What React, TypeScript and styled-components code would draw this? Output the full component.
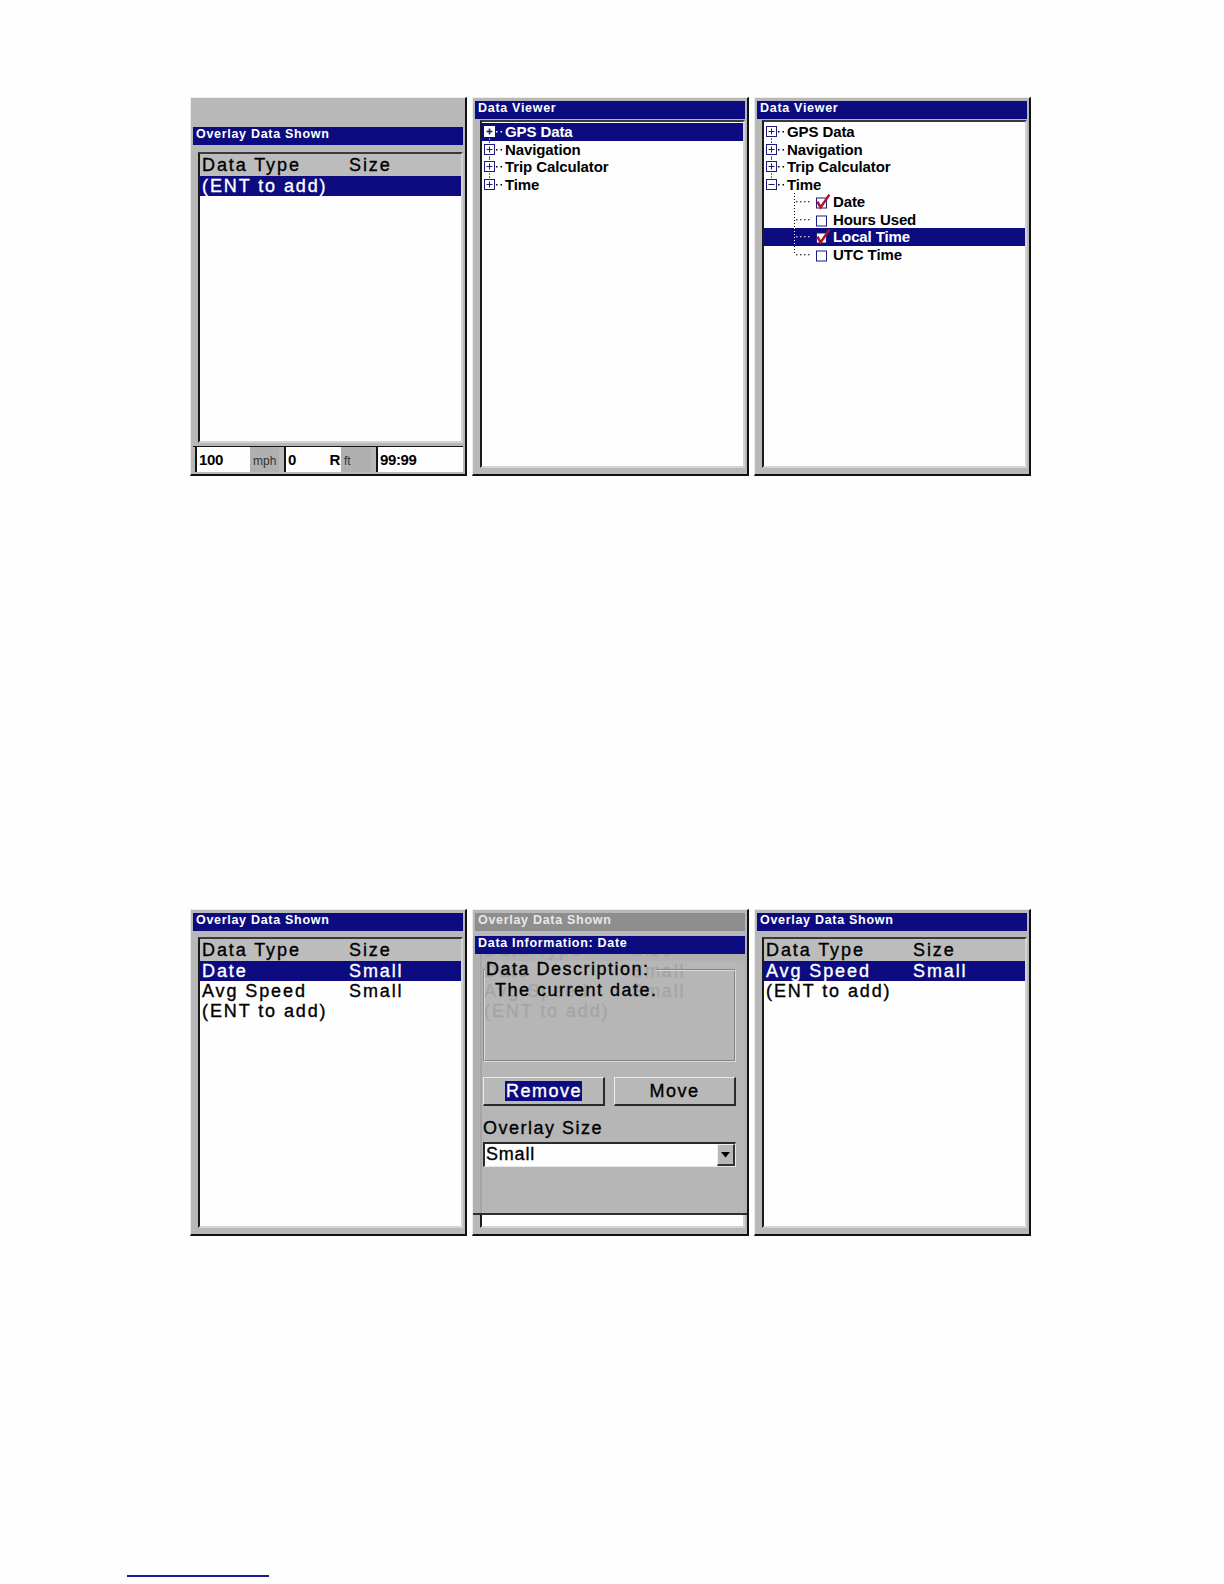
import styled, { createGlobalStyle } from "styled-components";

const NAVY = "#0c0c80";
const SCREEN_GRAY = "#b8b8b8";
const LINE_BLUE = "#1c1c7c";

const GlobalStyle = createGlobalStyle`
  body {
    margin: 0;
    background: #fefefe;
    font-family: "Liberation Sans", Arial, sans-serif;
  }
`;

type OverlayRow = { name: string; size?: string; sel?: boolean };
type TreeItem = { label: string; open?: boolean; sel?: boolean; children?: { label: string; checked: boolean; sel?: boolean }[] };

const Expander = ({ open, sel, first, last }: { open?: boolean; sel?: boolean; first?: boolean; last?: boolean }) => {
  const ink = sel ? "#fff" : "#000";
  return (
    <svg width="23" height="17.5" viewBox="0 0 23 17.5">
      {!first && <rect x="7" y="0.5" width="1" height="1.2" fill={ink} />}
      {!last && <rect x="7" y="15.5" width="1" height="1.2" fill={ink} />}
      <rect x="2.5" y="3.5" width="10" height="10" fill={sel ? "#fff" : "none"} stroke={sel ? "#fff" : LINE_BLUE} />
      <path d="M4.5 8.5H10.5" stroke={LINE_BLUE} strokeWidth={sel ? 1.6 : 1} />
      {!open && <path d="M7.5 5.5V11.5" stroke={LINE_BLUE} strokeWidth={sel ? 1.6 : 1} />}
      <rect x="14" y="8" width="1.5" height="1.5" fill={ink} />
      <rect x="18.5" y="8" width="1.5" height="1.5" fill={ink} />
    </svg>
  );
};

const ChildConnector = ({ last, sel }: { last?: boolean; sel?: boolean }) => {
  const ink = sel ? "#fff" : "#000";
  return (
    <svg width="50" height="17.5" viewBox="0 0 50 17.5">
      <line x1="30.5" y1="0" x2="30.5" y2={last ? 9 : 17.5} stroke={ink} strokeDasharray="1 2" />
      <line x1="32" y1="8.75" x2="48" y2="8.75" stroke={ink} strokeDasharray="1.5 2.5" />
    </svg>
  );
};

const CheckBox = ({ checked }: { checked: boolean }) => (
  <svg width="16" height="17.5" viewBox="0 0 16 17.5" overflow="visible">
    <rect x="2.5" y="5" width="10" height="10" fill="#fff" stroke={LINE_BLUE} />
    {checked && <path d="M3.4 8.6L6.6 14.4L15.4 1.6" fill="none" stroke="#b0102a" strokeWidth="2.5" />}
  </svg>
);

const OverlayList = ({ rows, gap }: { rows: OverlayRow[]; gap: number }) => (
  <ListBox $mt={gap}>
    <ListHeader>
      <span>Data Type</span>
      <span>Size</span>
    </ListHeader>
    {rows.map((r) => (
      <ListRow key={r.name} $sel={r.sel}>
        <span>{r.name}</span>
        <span>{r.size}</span>
      </ListRow>
    ))}
  </ListBox>
);

const DataViewer = ({ items }: { items: TreeItem[] }) => (
  <Screen $h={379}>
    <TitleBar>Data Viewer</TitleBar>
    <ListBox $mt={1} $pt={1}>
      {items.map((it, i) => (
        <div key={it.label}>
          <TreeRow $sel={it.sel}>
            <Expander open={it.open} sel={it.sel} first={i === 0} last={i === items.length - 1} />
            <TreeLabel>{it.label}</TreeLabel>
          </TreeRow>
          {it.open &&
            it.children?.map((c, j) => (
              <TreeRow key={c.label} $sel={c.sel}>
                <ChildConnector sel={c.sel} last={j === (it.children?.length ?? 0) - 1} />
                <CheckBox checked={c.checked} />
                <ChildLabel>{c.label}</ChildLabel>
              </TreeRow>
            ))}
        </div>
      ))}
    </ListBox>
  </Screen>
);

const treeClosed: TreeItem[] = [
  { label: "GPS Data", sel: true },
  { label: "Navigation" },
  { label: "Trip Calculator" },
  { label: "Time" },
];

const treeOpen: TreeItem[] = [
  { label: "GPS Data" },
  { label: "Navigation" },
  { label: "Trip Calculator" },
  {
    label: "Time",
    open: true,
    children: [
      { label: "Date", checked: true },
      { label: "Hours Used", checked: false },
      { label: "Local Time", checked: true, sel: true },
      { label: "UTC Time", checked: false },
    ],
  },
];

const App = () => {
  return (
    <Page>
      <GlobalStyle />
      <ScreenRow>
        <Screen $h={379} $pb={0}>
          <TopBand />
          <TitleBar>Overlay Data Shown</TitleBar>
          <OverlayList gap={7} rows={[{ name: "(ENT to add)", sel: true }]} />
          <StatusBar>
            <StatusField>
              <StatusValue $w={53}>100</StatusValue>
              <StatusUnit $w={29}>mph</StatusUnit>
            </StatusField>
            <StatusField $ml={5}>
              <StatusValue $w={55} $pr={1}>
                <span>0</span>
                <span>R</span>
              </StatusValue>
              <StatusUnit $w={30}>ft</StatusUnit>
            </StatusField>
            <StatusField $ml={5} $grow>
              <StatusValue>99:99</StatusValue>
            </StatusField>
          </StatusBar>
        </Screen>
        <DataViewer items={treeClosed} />
        <DataViewer items={treeOpen} />
      </ScreenRow>

      <ScreenRow $mt={433}>
        <Screen $h={327}>
          <TitleBar>Overlay Data Shown</TitleBar>
          <OverlayList
            gap={6}
            rows={[
              { name: "Date", size: "Small", sel: true },
              { name: "Avg Speed", size: "Small" },
              { name: "(ENT to add)" },
            ]}
          />
        </Screen>
        <Screen $h={327}>
          <TitleBar $dim>Overlay Data Shown</TitleBar>
          <OverlayList
            gap={6}
            rows={[
              { name: "Date", size: "Small" },
              { name: "Avg Speed", size: "Small" },
              { name: "(ENT to add)" },
            ]}
          />
          <Dialog>
            <TitleBar>Data Information: Date</TitleBar>
            <DialogBody>
              <Description>
                <legend>Data Description:</legend>
                <DescText>The current date.</DescText>
              </Description>
              <ButtonRow>
                <DlgButton>
                  <Focused>Remove</Focused>
                </DlgButton>
                <DlgButton>Move</DlgButton>
              </ButtonRow>
              <FieldLabel>Overlay Size</FieldLabel>
              <Select>
                <SelectValue>Small</SelectValue>
                <SelectArrow>
                  <svg width="9" height="6" viewBox="0 0 9 6">
                    <polygon points="0,0 9,0 4.5,5.5" fill="#000" />
                  </svg>
                </SelectArrow>
              </Select>
            </DialogBody>
          </Dialog>
        </Screen>
        <Screen $h={327}>
          <TitleBar>Overlay Data Shown</TitleBar>
          <OverlayList
            gap={6}
            rows={[
              { name: "Avg Speed", size: "Small", sel: true },
              { name: "(ENT to add)" },
            ]}
          />
        </Screen>
      </ScreenRow>

      <FooterRule />
    </Page>
  );
};

const Page = styled.div`
  display: flex;
  flex-direction: column;
  padding-top: 97px;
  box-sizing: border-box;
`;

const ScreenRow = styled.div<{ $mt?: number }>`
  display: flex;
  gap: 5px;
  margin-left: 190px;
  margin-top: ${(p) => p.$mt ?? 0}px;
`;

const Screen = styled.div<{ $h: number; $pb?: number }>`
  position: relative;
  width: 277px;
  height: ${(p) => p.$h}px;
  box-sizing: border-box;
  background: ${SCREEN_GRAY};
  border-style: solid;
  border-width: 1px 2px 2px 1px;
  border-color: #ececec #111 #111 #ececec;
  padding: 3px 2px ${(p) => p.$pb ?? 6}px 2px;
  display: flex;
  flex-direction: column;
`;

const TopBand = styled.div`
  flex: 0 0 26px;
`;

const TitleBar = styled.div<{ $dim?: boolean }>`
  flex: 0 0 18px;
  height: 18px;
  line-height: 18px;
  padding-left: 3px;
  background: ${(p) => (p.$dim ? "#8e8e8e" : NAVY)};
  color: ${(p) => (p.$dim ? "#e8e8e8" : "#fff")};
  font: bold 12.5px "Liberation Sans", Arial, sans-serif;
  letter-spacing: 0.7px;
  white-space: nowrap;
  overflow: hidden;
`;

const ListBox = styled.div<{ $mt: number; $pt?: number }>`
  flex: 1;
  margin: ${(p) => p.$mt}px 0 0 5px;
  padding-top: ${(p) => p.$pt ?? 0}px;
  background: #fefefe;
  border-style: solid;
  border-width: 2px;
  border-color: #3a3a3a #d4d4d4 #d4d4d4 #1a1a1a;
  overflow: hidden;
  display: flex;
  flex-direction: column;
`;

const ListHeader = styled.div`
  display: grid;
  grid-template-columns: 147px 1fr;
  height: 22px;
  line-height: 22px;
  padding-left: 2px;
  background: #bcbcbc;
  color: #000;
  font-size: 18px;
  letter-spacing: 1.9px;
  -webkit-text-stroke: 0.35px currentColor;
  white-space: nowrap;
`;

const ListRow = styled.div<{ $sel?: boolean }>`
  display: grid;
  grid-template-columns: 147px 1fr;
  height: 20px;
  line-height: 20px;
  padding-left: 2px;
  background: ${(p) => (p.$sel ? NAVY : "transparent")};
  color: ${(p) => (p.$sel ? "#fff" : "#000")};
  font-size: 18px;
  letter-spacing: 1.9px;
  -webkit-text-stroke: 0.35px currentColor;
  white-space: nowrap;
`;

const TreeRow = styled.div<{ $sel?: boolean }>`
  display: flex;
  align-items: center;
  height: 17.5px;
  background: ${(p) => (p.$sel ? NAVY : "transparent")};
  color: ${(p) => (p.$sel ? "#fff" : "#000")};
  font: bold 15px "Liberation Sans", Arial, sans-serif;
  letter-spacing: -0.1px;
  white-space: nowrap;
`;

const TreeLabel = styled.span`
  line-height: 17px;
`;

const ChildLabel = styled.span`
  margin-left: 3px;
  line-height: 17px;
`;

const StatusBar = styled.div`
  flex: 0 0 28px;
  box-sizing: border-box;
  margin-top: 3px;
  padding: 0 0 2px 2px;
  border-top: 1px solid #151515;
  display: flex;
`;

const StatusField = styled.div<{ $ml?: number; $grow?: boolean }>`
  display: flex;
  flex: ${(p) => (p.$grow ? 1 : "none")};
  margin-left: ${(p) => p.$ml ?? 0}px;
  border-left: 2px solid #151515;
`;

const StatusValue = styled.div<{ $w?: number; $pr?: number }>`
  width: ${(p) => (p.$w ? `${p.$w}px` : "auto")};
  flex: ${(p) => (p.$w ? "none" : 1)};
  box-sizing: border-box;
  padding: 0 ${(p) => p.$pr ?? 4}px 0 2px;
  background: #fefefe;
  display: flex;
  align-items: center;
  justify-content: space-between;
  font: bold 15px "Liberation Sans", Arial, sans-serif;
  letter-spacing: -0.4px;
  color: #000;
`;

const StatusUnit = styled.div<{ $w: number }>`
  width: ${(p) => p.$w}px;
  padding: 3px 0 0 3px;
  box-sizing: border-box;
  background: #b0b0b0;
  display: flex;
  align-items: center;
  font: 12px "Liberation Sans", Arial, sans-serif;
  color: #333;
`;

const Dialog = styled.div`
  position: absolute;
  top: 26px;
  left: 0;
  right: 0;
  height: 279px;
  box-sizing: border-box;
  padding: 0 2px;
  display: flex;
  flex-direction: column;
  background: rgba(176, 176, 176, 0.93);
  border-bottom: 2px solid #2e2e2e;
`;

const DialogBody = styled.div`
  flex: 1;
  display: flex;
  flex-direction: column;
  padding: 5px 9px 0 8px;
  font-size: 18px;
  letter-spacing: 1.5px;
  -webkit-text-stroke: 0.35px currentColor;
  color: #000;
`;

const Description = styled.fieldset`
  margin: 0;
  min-width: 0;
  height: 103px;
  box-sizing: border-box;
  padding: 0;
  border: 2px groove #dadada;

  legend {
    margin-left: 0;
    padding: 0 6px 0 1px;
    line-height: 21px;
  }
`;

const DescText = styled.p`
  margin: 0;
  padding-left: 10px;
  line-height: 21px;
`;

const ButtonRow = styled.div`
  display: flex;
  gap: 9px;
  margin-top: 15px;
`;

const DlgButton = styled.div`
  flex: 1;
  height: 29px;
  box-sizing: border-box;
  background: ${SCREEN_GRAY};
  border-style: solid;
  border-width: 1px 2px 2px 1px;
  border-color: #ececec #2a2a2a #2a2a2a #ececec;
  display: flex;
  align-items: center;
  justify-content: center;
`;

const Focused = styled.span`
  background: ${NAVY};
  color: #fff;
  padding: 0 0 0 1px;
  line-height: 20px;
`;

const FieldLabel = styled.div`
  margin-top: 12px;
  line-height: 21px;
`;

const Select = styled.div`
  margin-top: 3px;
  height: 25px;
  box-sizing: border-box;
  display: flex;
  background: #fefefe;
  border-style: solid;
  border-width: 2px 1px 1px 2px;
  border-color: #2a2a2a #e8e8e8 #e8e8e8 #2a2a2a;
`;

const SelectValue = styled.div`
  flex: 1;
  line-height: 21px;
  padding-left: 1px;
  letter-spacing: 0.8px;
`;

const SelectArrow = styled.div`
  width: 18px;
  box-sizing: border-box;
  background: ${SCREEN_GRAY};
  border-style: solid;
  border-width: 1px 2px 2px 1px;
  border-color: #f0f0f0 #333 #333 #f0f0f0;
  display: flex;
  align-items: center;
  justify-content: center;
`;

const FooterRule = styled.div`
  margin: 339px 0 0 127px;
  width: 142px;
  height: 2px;
  background: #1b1b8f;
`;

export default App;
